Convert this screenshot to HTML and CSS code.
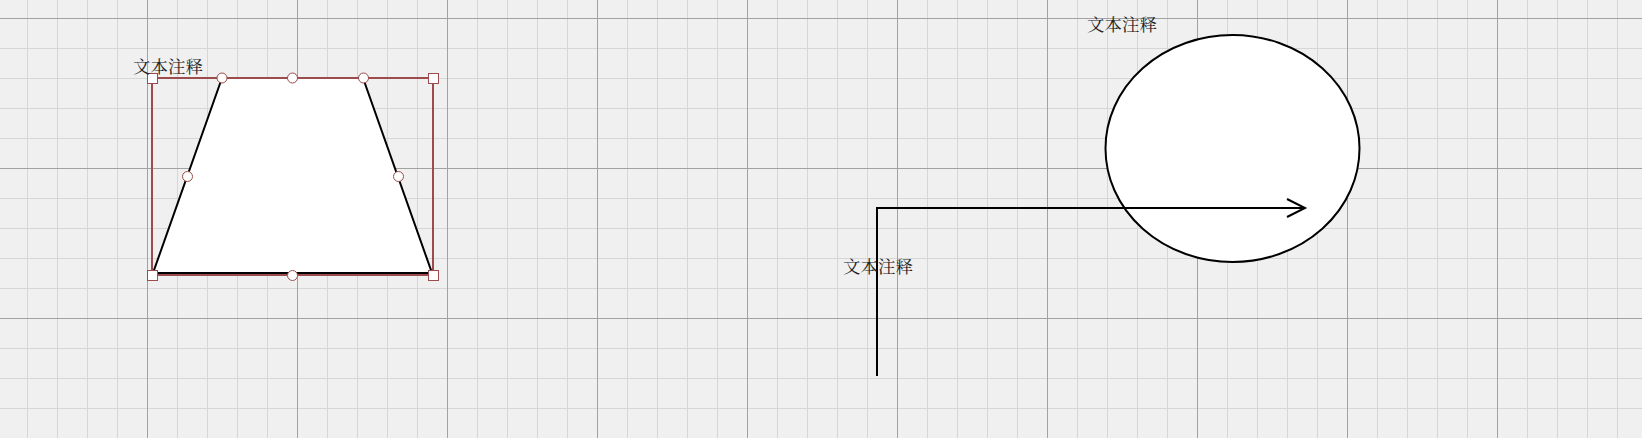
FILE: index.html
```html
<!DOCTYPE html>
<html lang="zh">
<head>
<meta charset="utf-8">
<title>Canvas</title>
<link rel="stylesheet" href="styles.css">
</head>
<body>
<div class="canvas">
  <svg class="drawing" width="1642" height="438" viewBox="0 0 1642 438" xmlns="http://www.w3.org/2000/svg">
    <!-- trapezoid -->
    <polygon class="shape" points="222,78 363,78 432,273 153,273"/>
    <!-- selection frame -->
    <rect class="sel" x="152" y="78" width="281" height="197"/>
    <rect class="handle" x="147.5" y="73.5" width="10" height="10"/>
    <rect class="handle" x="428.5" y="73.5" width="10" height="10"/>
    <rect class="handle" x="147.5" y="270.5" width="10" height="10"/>
    <rect class="handle" x="428.5" y="270.5" width="10" height="10"/>
    <circle class="handle" cx="222" cy="78" r="5"/>
    <circle class="handle" cx="292.5" cy="78" r="5"/>
    <circle class="handle" cx="363.5" cy="78" r="5"/>
    <circle class="handle" cx="187.5" cy="176.5" r="5"/>
    <circle class="handle" cx="398.5" cy="176.5" r="5"/>
    <circle class="handle" cx="292.5" cy="275.5" r="5"/>
    <!-- ellipse -->
    <ellipse class="shape" cx="1232.5" cy="148.5" rx="127" ry="113.5"/>
    <!-- connector -->
    <polyline class="wire" points="877,376 877,208 1305,208"/>
    <polyline class="wire" points="1287,199 1305,208 1287,217"/>
  </svg>
  <span class="label label-a">文本注释</span>
  <span class="label label-b">文本注释</span>
  <span class="label label-c">文本注释</span>
</div>
</body>
</html>
```

FILE: styles.css
```css
html, body {
  margin: 0;
  padding: 0;
  background: #f0f0f0;
}

.canvas {
  position: relative;
  width: 1642px;
  height: 438px;
  overflow: hidden;
  background-color: #f0f0f0;
  background-image:
    linear-gradient(to right, #a2a2a2 1px, transparent 1px),
    linear-gradient(to bottom, #a2a2a2 1px, transparent 1px),
    linear-gradient(to right, #d6d6d6 1px, transparent 1px),
    linear-gradient(to bottom, #d6d6d6 1px, transparent 1px);
  background-size: 150px 150px, 150px 150px, 30px 30px, 30px 30px;
  background-position: 147px 18px, 147px 18px, 27px 18px, 27px 18px;
}

.drawing {
  position: absolute;
  left: 0;
  top: 0;
}

.shape {
  fill: #ffffff;
  stroke: #000000;
  stroke-width: 2;
}

.sel {
  fill: none;
  stroke: #9c4c4c;
  stroke-width: 2;
}

.handle {
  fill: #ffffff;
  stroke: #9c4c4c;
  stroke-width: 1;
}

.wire {
  fill: none;
  stroke: #000000;
  stroke-width: 2;
}

.label {
  position: absolute;
  font-family: "Noto Serif CJK SC", "Noto Sans CJK SC", serif;
  font-size: 17.5px;
  line-height: 20px;
  color: #222222;
  white-space: nowrap;
}

.label-a {
  left: 133px;
  top: 56px;
}

.label-b {
  left: 1087px;
  top: 14px;
}

.label-c {
  left: 843px;
  top: 256px;
}
```
